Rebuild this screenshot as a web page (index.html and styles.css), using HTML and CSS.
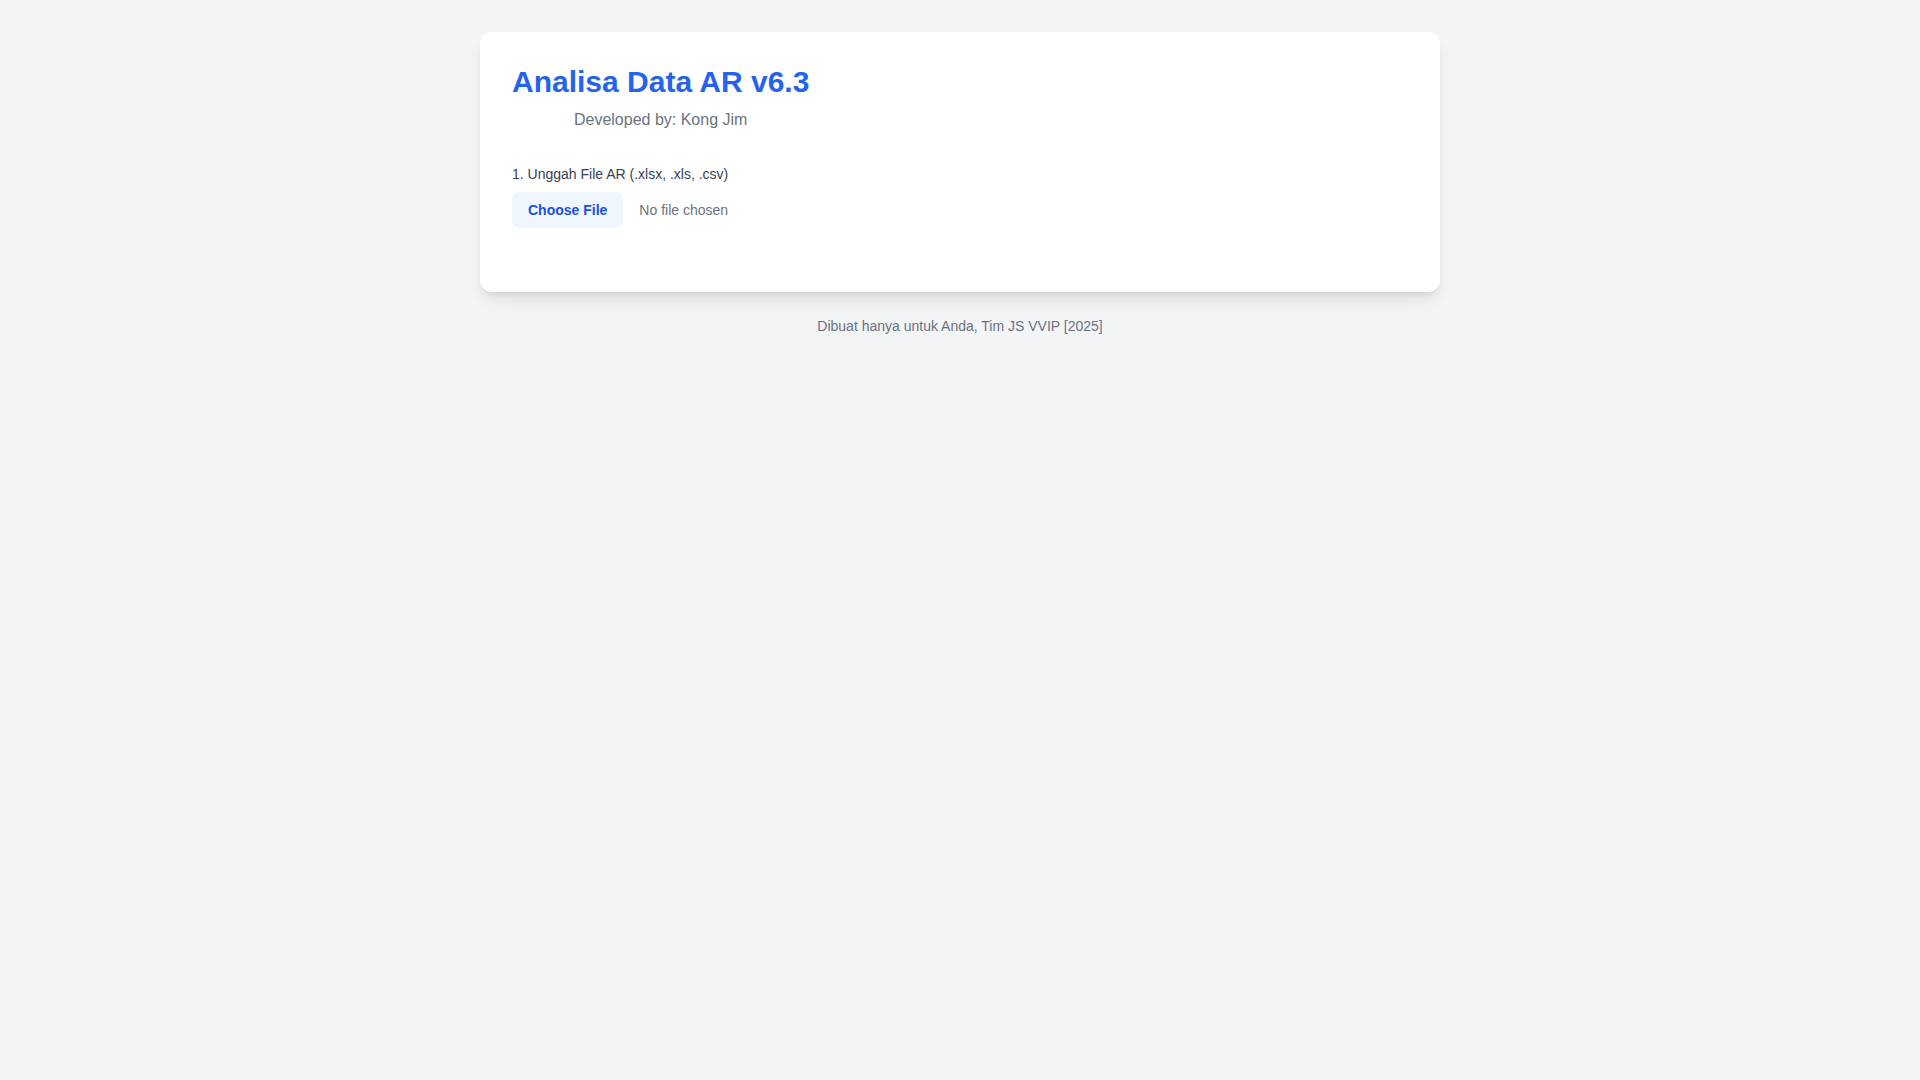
FILE: index.html
```html
<!DOCTYPE html>
<html lang="id">
<head>
    <meta charset="UTF-8">
    <meta name="viewport" content="width=device-width, initial-scale=1.0">
    <title>Analisa Data AR v6.3</title>
    <link rel="stylesheet" href="styles.css">
</head>
<body>
    <div class="container">
        <div class="header">
            <h1>Analisa Data AR v6.3</h1>
            <p class="subtitle">Developed by: Kong Jim</p>
        </div>
        <div class="upload">
            <label for="fileInput" class="upload-label">1. Unggah File AR (.xlsx, .xls, .csv)</label>
            <input type="file" id="fileInput" class="file-input" accept=".xlsx,.xls,.csv">
        </div>
    </div>
    <p class="footer">Dibuat hanya untuk Anda, Tim JS VVIP [2025]</p>
</body>
</html>
```

FILE: styles.css
```css
* {
    box-sizing: border-box;
    margin: 0;
    padding: 0;
}

body {
    font-family: "Liberation Sans", Arial, sans-serif;
    background-color: #f3f4f6;
    color: #1f2937;
    padding: 32px;
    min-height: 100vh;
}

.container {
    max-width: 960px;
    margin: 0 auto;
    background: #ffffff;
    border-radius: 12px;
    box-shadow: 0 10px 15px -3px rgba(0, 0, 0, 0.1), 0 4px 6px -4px rgba(0, 0, 0, 0.1);
    padding: 32px;
}

.header {
    width: fit-content;
    text-align: center;
    margin-bottom: 32px;
}

h1 {
    font-size: 30px;
    line-height: 36px;
    font-weight: 700;
    color: #2563eb;
}

.subtitle {
    font-size: 16px;
    line-height: 24px;
    color: #6b7280;
    margin-top: 8px;
}

.upload {
    margin-bottom: 32px;
}

.upload-label {
    display: block;
    font-size: 14px;
    line-height: 20px;
    font-weight: 500;
    color: #374151;
    margin-bottom: 8px;
}

.file-input {
    display: block;
    width: 100%;
    font-family: inherit;
    font-size: 14px;
    line-height: 20px;
    color: #6b7280;
}

.file-input::file-selector-button {
    margin-right: 16px;
    padding: 8px 16px;
    border: 0;
    border-radius: 8px;
    font-family: inherit;
    font-size: 14px;
    line-height: 20px;
    font-weight: 600;
    background-color: #eff6ff;
    color: #1d4ed8;
    cursor: pointer;
}

.file-input::file-selector-button:hover {
    background-color: #dbeafe;
}

.footer {
    text-align: center;
    margin-top: 24px;
    font-size: 14px;
    line-height: 20px;
    color: #6b7280;
}
```
